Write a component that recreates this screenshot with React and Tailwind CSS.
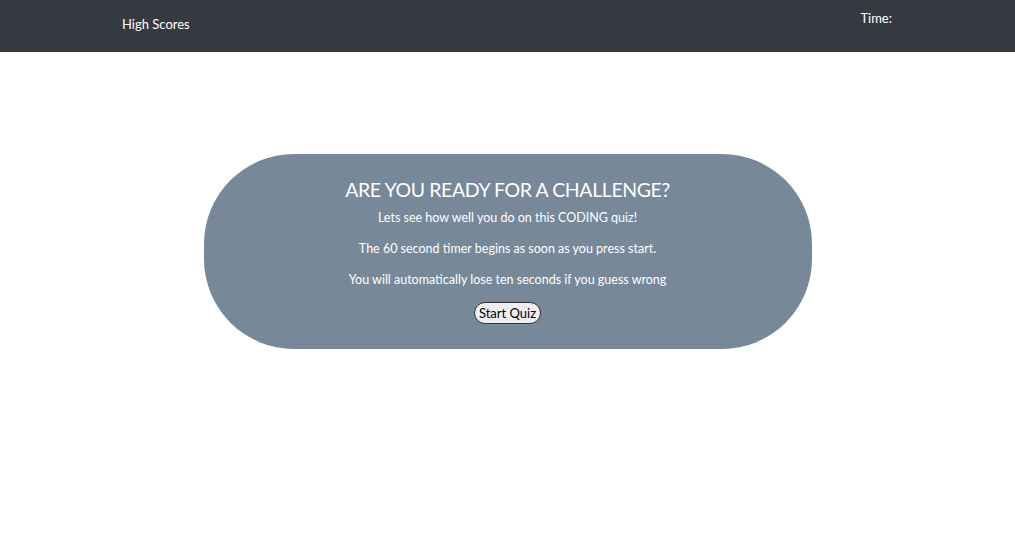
export default function App() {
  return (
    <div className="min-h-[552px] bg-white" style={{ fontFamily: 'Lato, "Open Sans", sans-serif' }}>
      <nav className="h-[52px] bg-[#343a40] flex items-start text-white text-[13px]">
        <a className="ml-[122px] mt-[15px]">High Scores</a>
        <span className="ml-auto mr-[123px] mt-[9px]">Time:</span>
      </nav>

      <div className="w-[608px] mx-auto mt-[102px] h-[195px] rounded-[90px] bg-[#778899] text-white text-center pt-[22px]">
        <h1 className="text-[19.5px] leading-[28px] tracking-[-0.4px]">ARE YOU READY FOR A CHALLENGE?</h1>
        <p className="text-[12.5px] leading-[17px] mt-[5px]">Lets see how well you do on this CODING quiz!</p>
        <p className="text-[12.5px] leading-[17px] mt-[14px]">The 60 second timer begins as soon as you press start.</p>
        <p className="text-[12.5px] leading-[17px] mt-[14px]">You will automatically lose ten seconds if you guess wrong</p>
        <button className="mt-[14px] px-[4px] h-[22px] rounded-full bg-[#efefef] border border-[#333] text-black text-[13px] leading-none">
          Start Quiz
        </button>
      </div>
    </div>
  );
}
